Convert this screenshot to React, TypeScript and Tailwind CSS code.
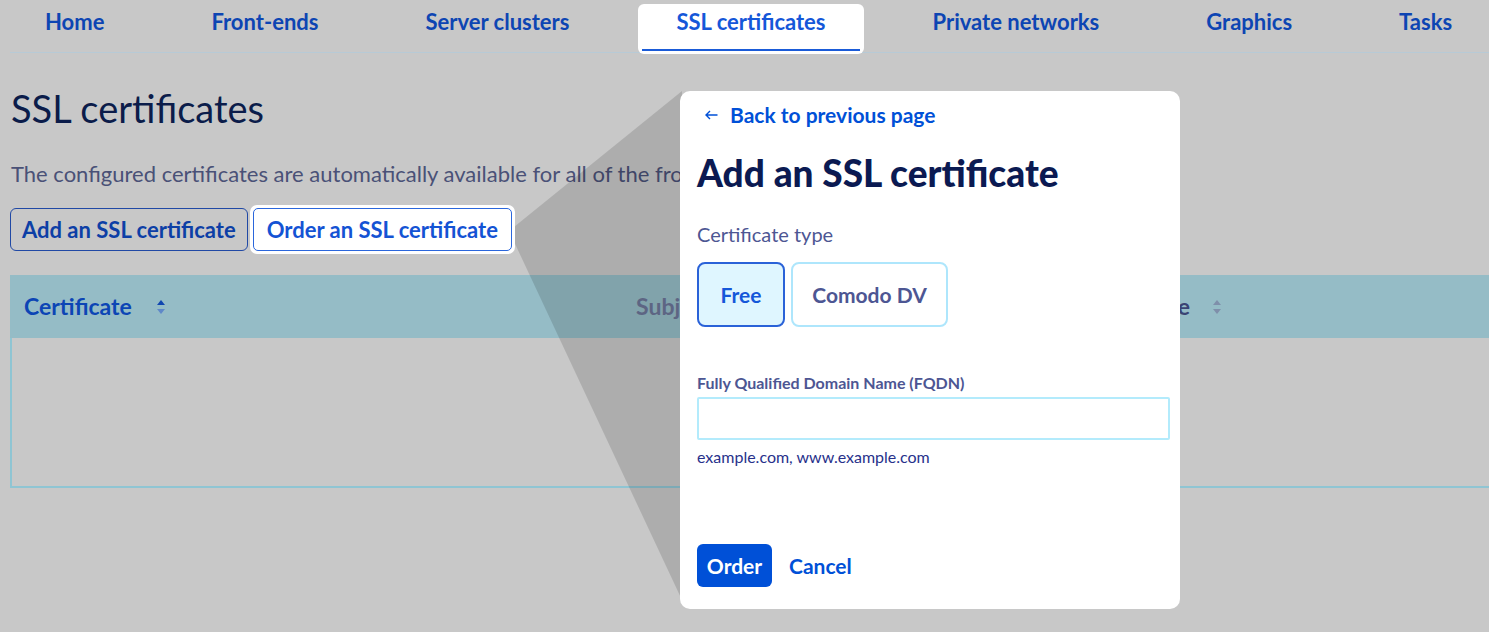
import { useState } from "react";

const tabs = [
  "Home",
  "Front-ends",
  "Server clusters",
  "SSL certificates",
  "Private networks",
  "Graphics",
  "Tasks",
];

function SortIcon({ up, down }: { up: string; down: string }) {
  return (
    <svg width="10" height="16" viewBox="0 0 10 16" className="shrink-0">
      <path d="M5 1 L9 6 L1 6 Z" fill={up} />
      <path d="M5 15 L9 10 L1 10 Z" fill={down} />
    </svg>
  );
}

function NavTabs() {
  return (
    <nav className="ml-[10px] h-[53px] border-b border-[#b7cad6]">
      <ul className="-ml-[3px] flex items-start gap-[31px]">
        {tabs.map((tab) => {
          const active = tab === "SSL certificates";
          return (
            <li
              key={tab}
              className={`relative mt-[4px] h-[50px] whitespace-nowrap rounded-[6px] px-[38px] pt-[5px] text-[22px] font-bold leading-[26px] ${
                active ? "bg-white text-[#1557d9]" : "text-[#0d45b3]"
              }`}
            >
              {tab}
              {active && (
                <span className="absolute bottom-[3px] left-[4px] right-[4px] h-[2px] bg-[#1a5bd8]" />
              )}
            </li>
          );
        })}
      </ul>
    </nav>
  );
}

function CertificateTable() {
  return (
    <div className="mt-[21px] w-[1500px]">
      <div className="flex h-[63px] items-center bg-[#95bcc6] pl-[14px] text-[23px] font-bold">
        <div className="flex w-[612px] items-center gap-[24px] text-[#0c45b5]">
          Certificate
          <SortIcon up="#1046b0" down="#5f88c9" />
        </div>
        <div className="w-[388px] text-[#6c7598]">Subject</div>
        <div className="flex w-[166px] justify-end text-[#3a4474]">Expiry date</div>
        <div className="ml-[22px]">
          <SortIcon up="#7f8faa" down="#7f8faa" />
        </div>
      </div>
      <div className="h-[150px] border-b-2 border-l-2 border-[#8fc5d3]" />
    </div>
  );
}

function OrderPanel() {
  const [type, setType] = useState<"free" | "comodo">("free");

  return (
    <div className="absolute left-[680px] top-[91px] z-20 flex h-[518px] w-[500px] flex-col rounded-[10px] bg-white px-[17px] pt-[12px]">
      <a className="flex items-center gap-[12px] pl-[8px] text-[21px] font-bold leading-[24px] text-[#0050d7]">
        <svg width="13" height="10" viewBox="0 0 13 10" fill="none" stroke="#0050d7" strokeWidth="1.4">
          <path d="M12.5 5 H1 M5 1 L1 5 L5 9" />
        </svg>
        Back to previous page
      </a>

      <h2 className="mt-[26px] text-[37px] font-black leading-[40px] text-[#0b1a52]">
        Add an SSL certificate
      </h2>

      <p className="mt-[27px] text-[20px] leading-[28px] text-[#4d5693]">Certificate type</p>

      <div className="mt-[14px] flex gap-[6px]">
        <button
          onClick={() => setType("free")}
          className={`h-[65px] w-[88px] rounded-[8px] text-[21px] font-bold ${
            type === "free"
              ? "border-2 border-[#2a62d8] bg-[#dff6ff] text-[#1557d9]"
              : "border-2 border-[#aee6fc] bg-white text-[#4d5693]"
          }`}
        >
          Free
        </button>
        <button
          onClick={() => setType("comodo")}
          className={`h-[65px] w-[157px] rounded-[8px] text-[21px] font-bold ${
            type === "comodo"
              ? "border-2 border-[#2a62d8] bg-[#dff6ff] text-[#1557d9]"
              : "border-2 border-[#aee6fc] bg-white text-[#4d5693]"
          }`}
        >
          Comodo DV
        </button>
      </div>

      <label className="mt-[46px] text-[16px] font-bold leading-[20px] text-[#4d5693]">
        Fully Qualified Domain Name (FQDN)
      </label>
      <input className="mt-[4px] h-[43px] w-[473px] rounded-[2px] border-2 border-[#b3ebfc] px-3 outline-none" />
      <p className="mt-[7px] text-[16px] leading-[20px] text-[#27318b]">example.com, www.example.com</p>

      <div className="mt-[77px] flex items-center gap-[17px]">
        <button className="h-[43px] w-[75px] rounded-[6px] bg-[#0050d7] text-[21px] font-bold text-white">
          Order
        </button>
        <button className="text-[21px] font-bold text-[#0050d7]">Cancel</button>
      </div>
    </div>
  );
}

export default function App() {
  return (
    <div className="relative h-[632px] w-[1489px] overflow-hidden bg-[#c8c8c8] font-['Lato',sans-serif]">
      <NavTabs />

      <main className="pl-[10px]">
        <h1 className="mt-[33px] pl-[1px] text-[38px] leading-[44px] text-[#0b1c4a]">SSL certificates</h1>
        <p className="mt-[30px] w-[670px] overflow-hidden whitespace-nowrap pl-[1px] text-[22px] leading-[28px] text-[#4a5177]">
          The configured certificates are automatically available for all of the front-ends.
        </p>

        <div className="mt-[17px] flex items-start gap-[2px]">
          <button className="mt-[3px] h-[43px] rounded-[6px] border-[1.5px] border-[#2149a5] px-[11px] text-[22px] font-bold text-[#0d3fa6]">
            Add an SSL certificate
          </button>
          <div className="relative z-10 rounded-[7px] bg-white p-[3px]">
            <button className="h-[43px] rounded-[5px] border-[1.5px] border-[#2a66dc] px-[13px] text-[22px] font-bold text-[#1453d4]">
              Order an SSL certificate
            </button>
          </div>
        </div>

        <CertificateTable />
      </main>

      {/* zoom wedge from the button to the panel */}
      <svg className="pointer-events-none absolute inset-0 z-[5]" width="1489" height="632">
        <polygon points="509,231 682,91 682,600" fill="#000" fillOpacity="0.135" />
      </svg>

      <OrderPanel />
    </div>
  );
}
